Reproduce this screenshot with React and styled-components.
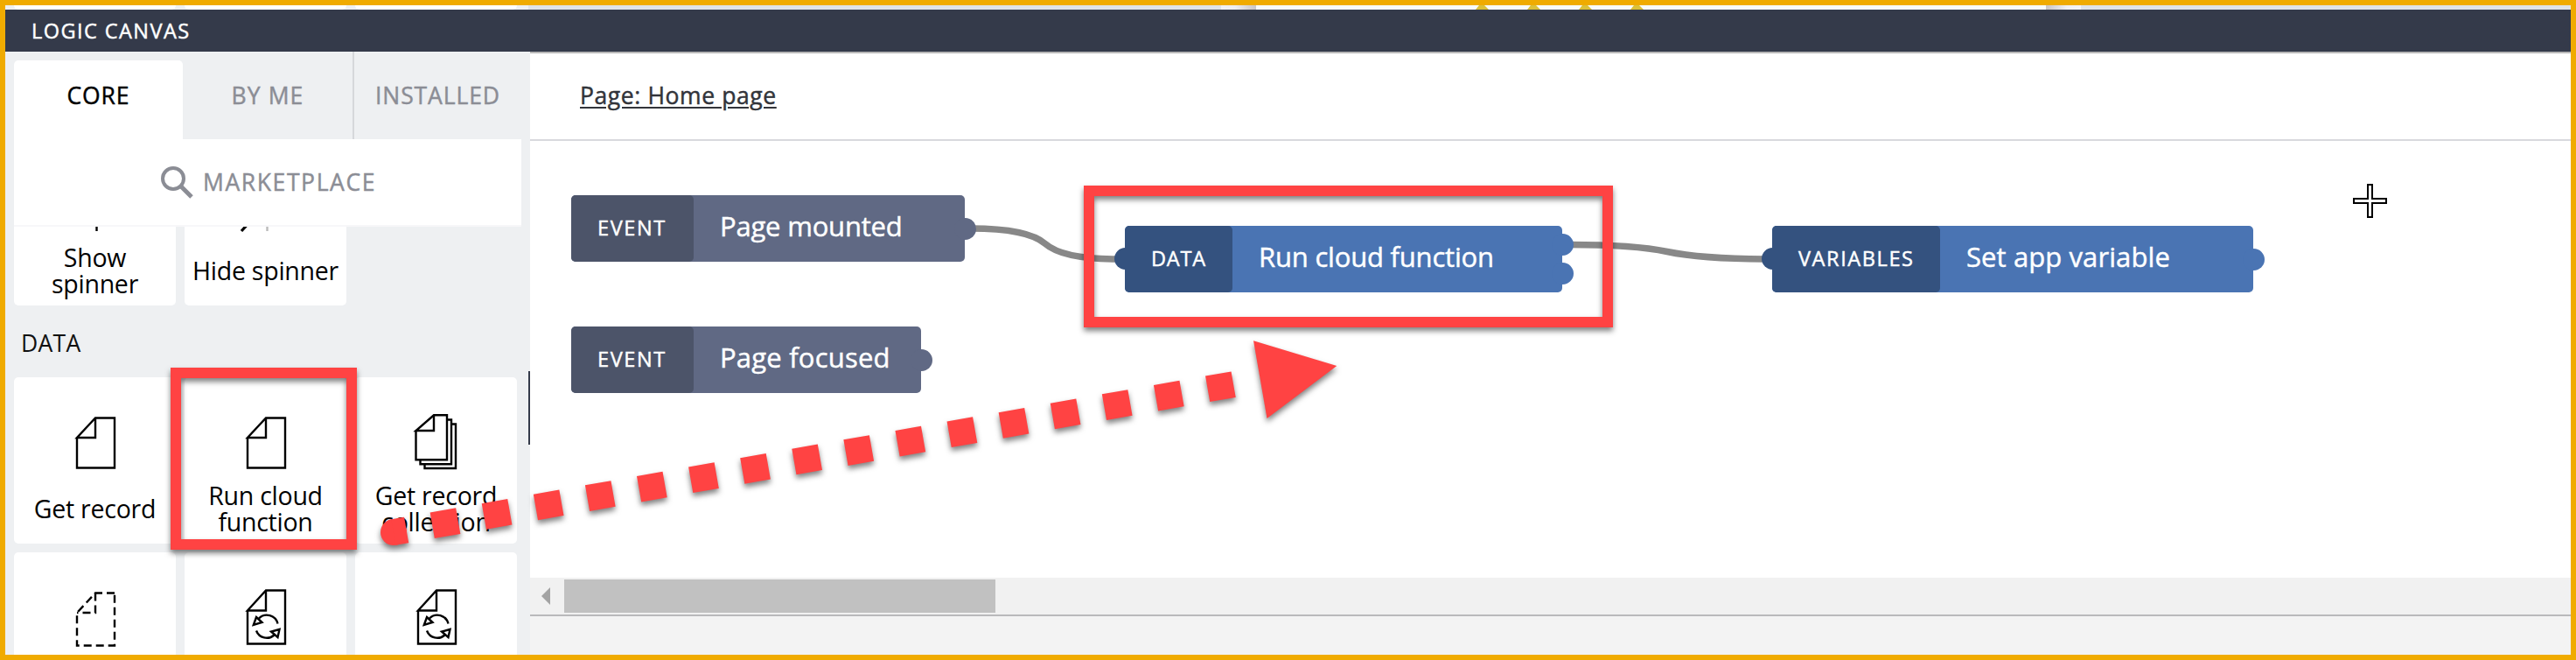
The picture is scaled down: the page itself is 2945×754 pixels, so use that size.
import React from "react";
import styled, { createGlobalStyle } from "styled-components";

const Global = createGlobalStyle`
  * { box-sizing: border-box; }
  body { margin: 0; }
`;

const Frame = styled.div`
  position: relative;
  width: 2945px;
  height: 754px;
  border: 6px solid #f0ab00;
  background: #fff;
  overflow: hidden;
  display: flex;
  flex-direction: column;
  font-family: "Open Sans", "Noto Sans", sans-serif;
`;

const PageStrip = styled.div`
  flex: 0 0 5px;
  display: flex;
  background: #dfe3e8;
`;
const StripCards = styled.div`
  width: 598px;
  padding-left: 10px;
  display: flex;
  gap: 10px;
  background: #eef0f2;
`;
const StripCard = styled.div`
  width: 185px;
  background: #fff;
  border-radius: 0 0 5px 5px;
`;
const StripCanvas = styled.svg`
  margin-left: 792px;
  display: block;
`;

const Header = styled.header`
  flex: 0 0 48px;
  background: #343a4a;
  color: #fff;
  padding-left: 30px;
  display: flex;
  align-items: center;
`;

const Label = styled.span`
  font-size: ${(p) => p.$size}px;
  -webkit-text-stroke: ${(p) => (p.$firm ? 0.45 : 0)}px currentColor;
  letter-spacing: ${(p) => p.$ls || 0}px;
  line-height: 30px;
  white-space: nowrap;
`;

const Body = styled.div`
  flex: 1;
  min-height: 0;
  display: flex;
`;

const Sidebar = styled.aside`
  position: relative;
  width: 600px;
  background: #eef0f2;
  padding-left: 10px;
  display: flex;
  flex-direction: column;
`;
const Tabs = styled.nav`
  flex: 0 0 100px;
  display: flex;
`;
const Tab = styled.div`
  width: ${(p) => p.$w}px;
  margin-top: ${(p) => (p.$active ? 10 : 0)}px;
  padding-top: ${(p) => (p.$active ? 25 : 35)}px;
  text-align: center;
  line-height: 30px;
  color: ${(p) => (p.$active ? "#000" : "#8b8d95")};
  background: ${(p) => (p.$active ? "#fff" : "transparent")};
  border-radius: ${(p) => (p.$active ? "5px 5px 0 0" : "0")};
  border-left: ${(p) => (p.$divided ? "2px solid #d6d8db" : "0")};
`;
const Market = styled.div`
  flex: 0 0 100px;
  width: 580px;
  background: #fff;
  border-bottom: 2px solid #f7f7f9;
  color: #8b8d95;
  display: flex;
  align-items: center;
  padding: 0 0 1px 167px;
  gap: 11px;
`;
const List = styled.div`
  flex: 1;
  min-height: 0;
  overflow: hidden;
  display: flex;
  flex-direction: column;
`;
const Row = styled.div`
  flex: 0 0 190px;
  display: flex;
  gap: 10px;
  margin-top: ${(p) => p.$mt || 0}px;
`;
const Card = styled.div`
  width: 185px;
  height: 190px;
  background: #fff;
  border-radius: 5px;
  display: flex;
  flex-direction: column;
  align-items: center;
`;
const CardIcon = styled.svg`
  flex: 0 0 120px;
  width: 185px;
  height: 120px;
`;
const CardLabel = styled.div`
  flex: 0 0 60px;
  width: 171px;
  display: flex;
  align-items: center;
  justify-content: center;
  text-align: center;
  font-size: 28.5px;
  line-height: 30px;
  letter-spacing: -0.25px;
`;
const Section = styled.div`
  flex: 0 0 82px;
  padding: 28px 0 0 8px;
  line-height: 30px;
  color: #111;
`;
const SplitHandle = styled.div`
  position: absolute;
  right: 0;
  top: 365px;
  width: 2px;
  height: 84px;
  background: #343a4a;
`;

const Main = styled.main`
  flex: 1;
  display: flex;
  flex-direction: column;
`;
const Crumb = styled.div`
  flex: 0 0 102px;
  border-top: 2px solid #b8b8b8;
  border-bottom: 2px solid #d8d9dd;
  padding: 33px 0 0 57px;
  color: #32343a;
`;
const PageLink = styled.a`
  display: block;
  white-space: nowrap;
  font-size: 26.5px;
  -webkit-text-stroke: 0.45px currentColor;
  line-height: 30px;
  letter-spacing: 0.6px;
  text-decoration: underline;
  text-decoration-thickness: 2px;
  text-underline-offset: 3px;
`;
const Canvas = styled.div`
  position: relative;
  flex: 1;
`;
const Wires = styled.svg`
  position: absolute;
  left: 0;
  top: 0;
`;
const Node = styled.div`
  position: absolute;
  left: ${(p) => p.$x}px;
  top: ${(p) => p.$y}px;
  width: ${(p) => p.$w}px;
  height: 75.5px;
  display: flex;
  border-radius: 5px;
  background: ${(p) => (p.$blue ? "#4a74b3" : "#606984")};
  color: #fff;
`;
const Tag = styled.div`
  position: relative;
  width: ${(p) => p.$w}px;
  border-radius: 5px;
  background: ${(p) => (p.$blue ? "#34527f" : "#4c5469")};
  display: flex;
  align-items: center;
  padding: 0 0 2px 30px;
`;
const Title = styled.div`
  display: flex;
  align-items: center;
  padding: 0 0 5px 30px;
`;
const Port = styled.span`
  position: absolute;
  width: 25px;
  height: 25px;
  border-radius: 50%;
  top: ${(p) => p.$cy - 12.5}px;
  ${(p) => (p.$left ? "left" : "right")}: -12.5px;
  background: ${(p) => (p.$left ? "#34527f" : "inherit")};
`;
const Scroll = styled.div`
  flex: 0 0 44px;
  background: #f1f1f1;
  border-bottom: 2px solid #b9b9bb;
  padding: 2px 0 2px 13px;
  display: flex;
  align-items: center;
  gap: 16px;
`;
const Thumb = styled.div`
  width: 493px;
  height: 38px;
  background: #c1c1c1;
`;
const Footer = styled.div`
  flex: 0 0 44px;
  background: #f3f3f3;
`;

const Highlight = styled.div`
  position: absolute;
  left: ${(p) => p.$x}px;
  top: ${(p) => p.$y}px;
  width: ${(p) => p.$w}px;
  height: ${(p) => p.$h}px;
  border: 12px solid #ff4343;
  filter: drop-shadow(0 4px 3px rgba(0, 0, 0, 0.5));
`;
const Overlay = styled.svg`
  position: absolute;
  left: -6px;
  top: -6px;
  filter: drop-shadow(0 4px 3px rgba(0, 0, 0, 0.5));
`;
const Cursor = styled.svg`
  position: absolute;
  left: 2684px;
  top: 204px;
`;

const ink = { fill: "none", stroke: "#000", strokeWidth: 2.4 };

const FileIcon = () => (
  <CardIcon viewBox="0 0 185 120" {...ink}>
    <path d="M72 69V103.500H115V46.500H93L72 69H93V46.500" />
  </CardIcon>
);
const StackIcon = () => (
  <CardIcon viewBox="0 0 185 120" {...ink}>
    <path d="M69.500 61V94.300H105V43.300H90L69.500 61H90V43.300M105 48.500H110V99.300H74.500V94.300M110 53.500H115V104H79.500V99.300" />
  </CardIcon>
);
const DashedIcon = () => (
  <CardIcon viewBox="0 0 185 120" {...ink} strokeDasharray="9 5">
    <path d="M115 46.500H93L72 69V106.500H115V46.500" />
    <path d="M93 46.500V69H72" />
  </CardIcon>
);
const SyncIcon = () => (
  <CardIcon viewBox="0 0 185 120" {...ink}>
    <path d="M72 66.500V104.500H115V43.500H93L72 66.500H93V43.500" />
    <path d="M106.500 81.500A12.800 12.800 0 0 0 85 75.500M82 89.500A12.800 12.800 0 0 0 102.500 94.500" />
    <path d="M82 74L88.500 80L78.800 83ZM108.500 88L99 90.500L106.500 97Z" />
  </CardIcon>
);

const PaletteCard = ({ icon: Icon, label }) => (
  <Card>
    <Icon />
    {label && <CardLabel>{label}</CardLabel>}
  </Card>
);
const ShowIcon = () => (
  <CardIcon viewBox="0 0 185 120" {...ink}><path d="M94.500 90V105" /></CardIcon>
);
const HideIcon = () => (
  <CardIcon viewBox="0 0 185 120" {...ink}>
    <path d="M65 105L75 94" strokeWidth="3.200" />
    <path d="M94.500 90V105" stroke="#bbb" />
  </CardIcon>
);

const FlowNode = ({ x, y, w, blue, tagW, tag, tagLs, title, titleLs, inPort, outs }) => (
  <Node $x={x} $y={y} $w={w} $blue={blue}>
    {inPort && <Port $left $cy={37.75} />}
    {outs.map((cy) => <Port key={cy} $cy={cy} />)}
    <Tag $w={tagW} $blue={blue}><Label $size={23.5} $firm $ls={tagLs}>{tag}</Label></Tag>
    <Title><Label $size={31} $firm $ls={titleLs}>{title}</Label></Title>
  </Node>
);

export default function App() {
  return (
    <>
      <Global />
      <Frame>
        <PageStrip>
          <StripCards><StripCard /><StripCard /><StripCard /></StripCards>
          <StripCanvas width="983" height="5">
            <defs>
              <linearGradient id="edge"><stop offset="0" stopColor="#f1f1f3" /><stop offset=".4" stopColor="#eeeef0" /><stop offset="1" stopColor="#c9c5c4" /></linearGradient>
              <linearGradient id="edgeEnd"><stop offset="0" stopColor="#c9c5c4" /><stop offset=".6" stopColor="#f1f1f3" /><stop offset="1" stopColor="#f4f4f6" /></linearGradient>
            </defs>
            <rect width="40" height="5" fill="url(#edge)" />
            <rect x="40" width="903" height="5" fill="#f8fbfb" />
            <rect x="943" width="40" height="5" fill="url(#edgeEnd)" />
            {[291, 350, 409, 468].map((x) => (
              <path key={x} d={`M${x} 5L${x + 4} 0H${x + 10}L${x + 15} 5Z`} fill="#dcc037" />
            ))}
          </StripCanvas>
        </PageStrip>
        <Header><Label $size={23.5} $firm $ls={1.45}>LOGIC CANVAS</Label></Header>
        <Body>
          <Sidebar>
            <Tabs>
              <Tab $w={193} $active><Label $size={26.500} $firm $ls={0.9}>CORE</Label></Tab>
              <Tab $w={194}><Label $size={26.500} $firm $ls={1.1}>BY ME</Label></Tab>
              <Tab $w={193} $divided><Label $size={26.500} $firm $ls={0.9}>INSTALLED</Label></Tab>
            </Tabs>
            <Market>
              <svg width="38" height="38" viewBox="0 0 38 38" fill="none" stroke="#8b8d95">
                <ellipse cx="15" cy="15" rx="12" ry="12" strokeWidth="4" />
                <path d="M24 24L36 36" strokeWidth="5" />
              </svg>
              <Label $size={26.500} $firm $ls={1.6}>MARKETPLACE</Label>
            </Market>
            <List>
              <Row $mt={-100}>
                <PaletteCard icon={ShowIcon} label="Show spinner" />
                <PaletteCard icon={HideIcon} label="Hide spinner" />
              </Row>
              <Section><Label $size={26.500} $ls={0.3}>DATA</Label></Section>
              <Row>
                <PaletteCard icon={FileIcon} label="Get record" />
                <PaletteCard icon={FileIcon} label="Run cloud function" />
                <PaletteCard icon={StackIcon} label="Get record collection" />
              </Row>
              <Row $mt={10}>
                <PaletteCard icon={DashedIcon} />
                <PaletteCard icon={SyncIcon} />
                <PaletteCard icon={SyncIcon} />
              </Row>
            </List>
            <SplitHandle />
          </Sidebar>
          <Main>
            <Crumb><PageLink>Page: Home page</PageLink></Crumb>
            <Canvas>
              <Wires width="2333" height="499" viewBox="606 161 2333 499" fill="none" stroke="#888" strokeWidth="7.500">
                <path d="M1110 261Q1175 261 1195 278.500T1278 296" />
                <path d="M1794 279.500Q1868 279.500 1906 287.500T2018 296" />
              </Wires>
              <FlowNode x={47} y={62} w={450} tagW={140} tag="EVENT" tagLs={1.6} title="Page mounted" titleLs={-0.2} outs={[38]} />
              <FlowNode x={47} y={212} w={400} tagW={140} tag="EVENT" tagLs={1.6} title="Page focused" titleLs={0.2} outs={[38]} />
              <FlowNode x={680} y={97} w={500} tagW={123} tag="DATA" tagLs={0.8} title="Run cloud function" titleLs={-0.2} blue inPort outs={[21.5, 54.500]} />
              <FlowNode x={1420} y={97} w={550} tagW={192} tag="VARIABLES" tagLs={1.6} title="Set app variable" titleLs={0.1} blue inPort outs={[38]} />
            </Canvas>
            <Scroll>
              <svg width="10" height="20"><path d="M10 0V20L0 10Z" fill="#a3a3a3" /></svg>
              <Thumb />
            </Scroll>
            <Footer />
          </Main>
        </Body>
        <Highlight $x={189} $y={414} $w={213} $h={208} />
        <Highlight $x={1233} $y={206} $w={605} $h={162} />
        <Overlay width="2945" height="754">
          <circle cx="450" cy="608.100" r="15" fill="#ff4343" />
          <path d="M449.900 608.100L1411 439" stroke="#ff4343" strokeWidth="30" strokeDasharray="30 30" strokeDashoffset="15" />
          <path d="M1433 389.300L1528.300 418L1448.500 478Z" fill="#ff4343" />
        </Overlay>
        <Cursor width="40" height="40">
          <path d="M17 1H22V17H38V22H22V38H17V22H1V17H17Z" fill="#fff" stroke="#000" strokeWidth="2" />
        </Cursor>
      </Frame>
    </>
  );
}
